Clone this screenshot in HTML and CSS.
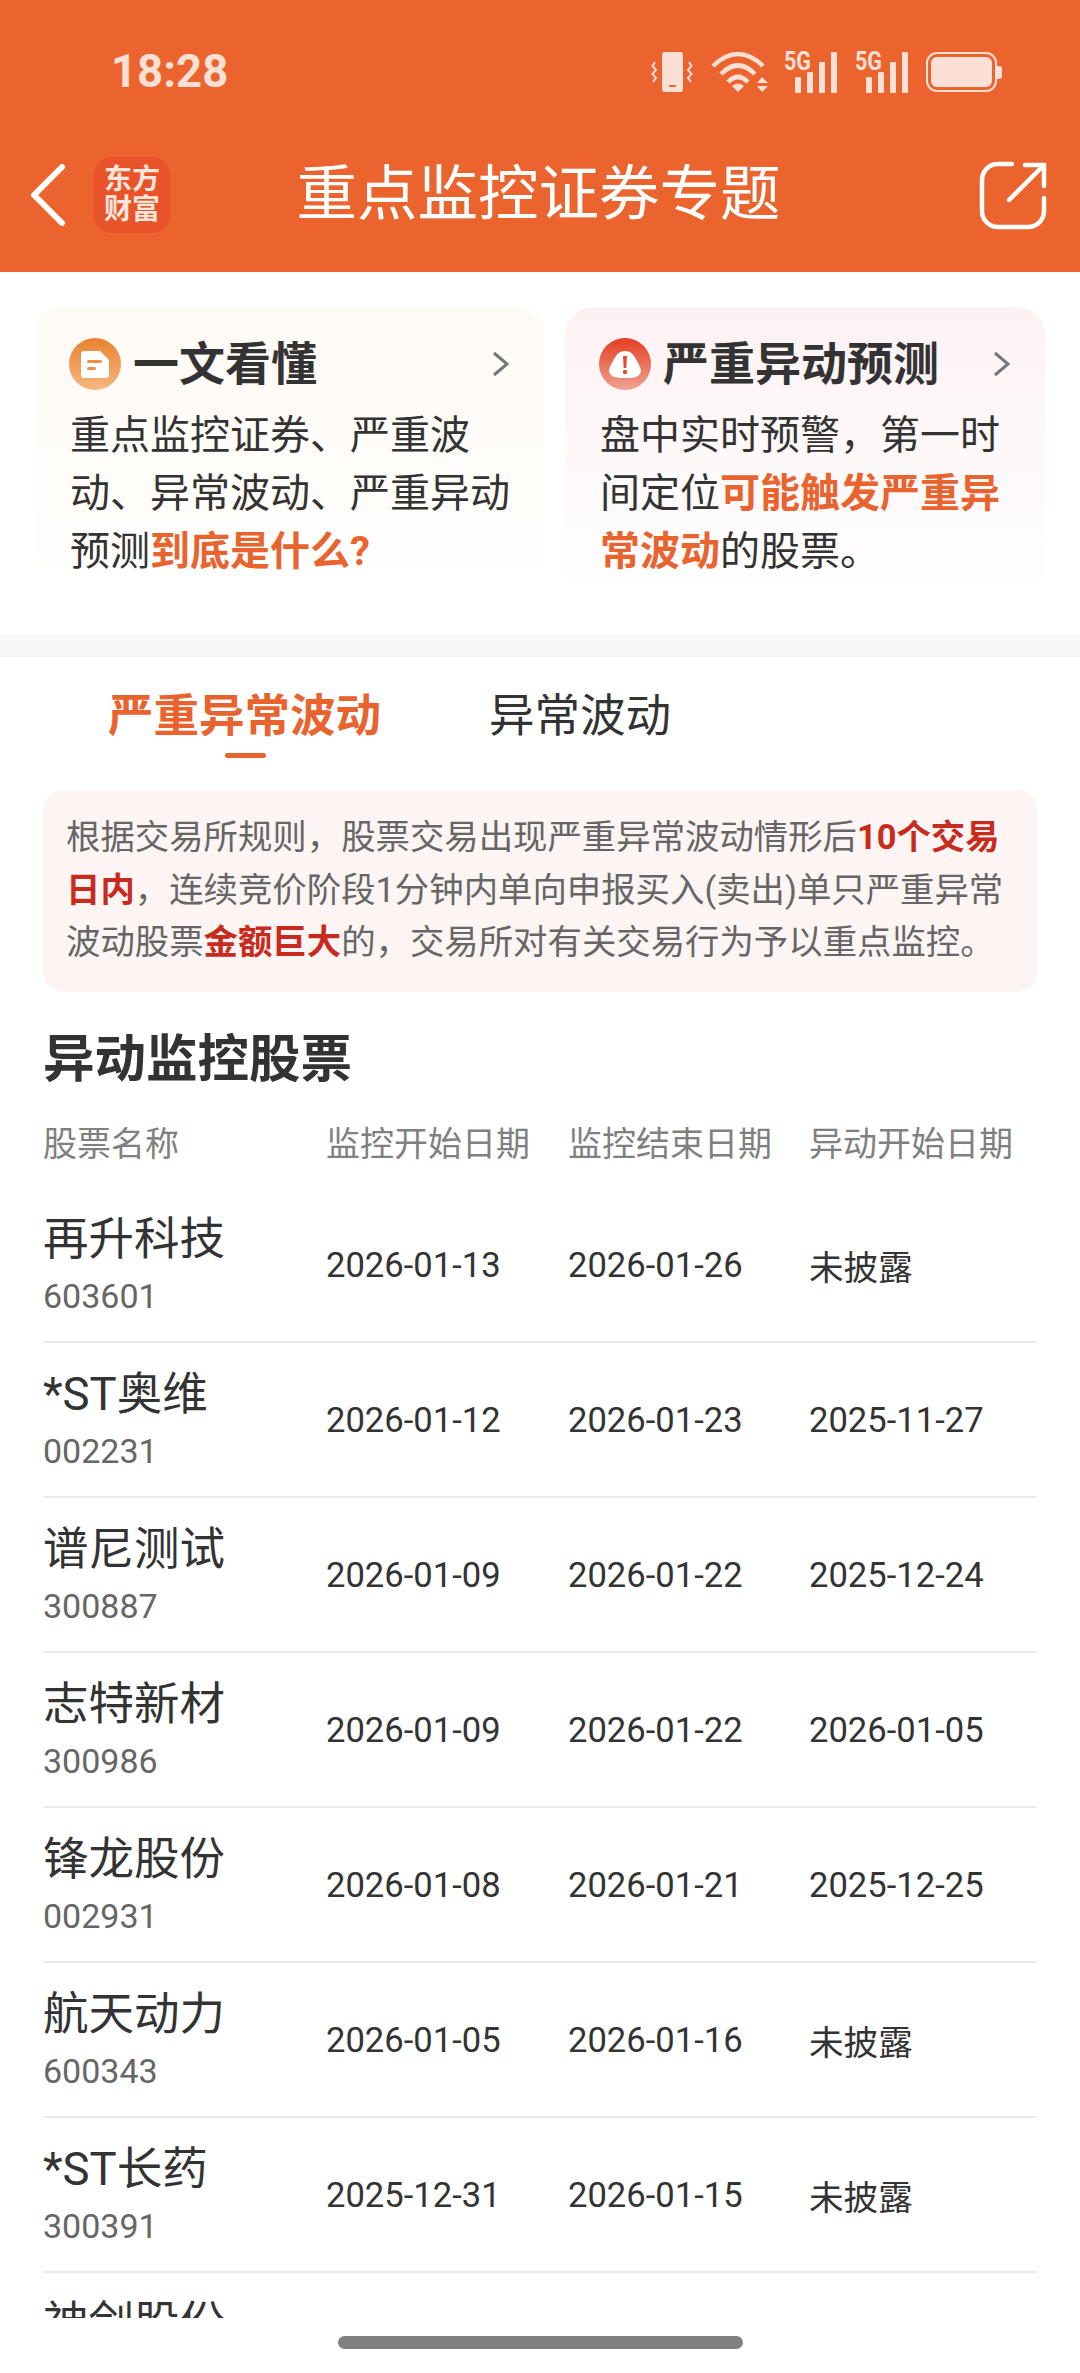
FILE: index.html
```html
<!DOCTYPE html>
<html lang="zh-CN">
<head>
    <meta charset="UTF-8">
    <meta name="viewport" content="width=device-width, initial-scale=1.0">
    <title>重点监控证券专题</title>
    <link rel="stylesheet" href="styles.css">
</head>
<body>
    <div class="screen">
        <header class="top">
            <div class="statusbar">
                <span class="time">18:28</span>
                <div class="status-icons">
                    <svg class="ic-vibrate" width="42" height="42" viewBox="0 0 42 42">
                        <rect x="11" y="1" width="21" height="40" rx="3" fill="#fde0d5"/>
                        <rect x="18" y="34" width="7" height="2" rx="1" fill="#eb632d"/>
                        <path d="M4 11 L1.500 15 L5 19 L1.500 23 L5 27 L2 31 M38 11 L40.500 15 L37 19 L40.500 23 L37 27 L40 31" fill="none" stroke="#fde0d5" stroke-width="2"/>
                    </svg>
                    <svg class="ic-wifi" width="58" height="42" viewBox="0 0 58 42">
                        <path d="M2 15 Q27 -9 52 15" fill="none" stroke="#fde0d5" stroke-width="4.500"/>
                        <path d="M10 23 Q27 6 44 23" fill="none" stroke="#fde0d5" stroke-width="4.500"/>
                        <path d="M17 31 Q27 21 37 31" fill="none" stroke="#fde0d5" stroke-width="4.500"/>
                        <path d="M21 35 Q27 30 33 35 L27 41 Z" fill="#fde0d5"/>
                        <path d="M46 32 L51 26 L57 32 Z M46 35 L57 35 L51 41 Z" fill="#fde0d5"/>
                    </svg>
                    <svg class="ic-signal" width="56" height="52" viewBox="0 -10 56 52">
                        <text class="net-label" x="0" y="19" textLength="27" lengthAdjust="spacingAndGlyphs">5G</text>
                        <rect x="11" y="26" width="6" height="16" rx="1" fill="#fde0d5"/>
                        <rect x="23" y="21" width="6" height="21" rx="1" fill="#fde0d5"/>
                        <rect x="35" y="11" width="6" height="31" rx="1" fill="#fde0d5"/>
                        <rect x="47" y="1" width="6" height="41" rx="1" fill="#fde0d5"/>
                    </svg>
                    <svg class="ic-signal" width="56" height="52" viewBox="0 -10 56 52">
                        <text class="net-label" x="0" y="19" textLength="27" lengthAdjust="spacingAndGlyphs">5G</text>
                        <rect x="11" y="26" width="6" height="16" rx="1" fill="#fde0d5"/>
                        <rect x="23" y="21" width="6" height="21" rx="1" fill="#fde0d5"/>
                        <rect x="35" y="11" width="6" height="31" rx="1" fill="#fde0d5"/>
                        <rect x="47" y="1" width="6" height="41" rx="1" fill="#fde0d5"/>
                    </svg>
                    <svg class="ic-battery" width="76" height="42" viewBox="0 0 76 42">
                        <rect x="1" y="2" width="69" height="38" rx="10" fill="none" stroke="#fde0d5" stroke-width="2"/>
                        <rect x="5" y="6" width="61" height="30" rx="6" fill="#fde0d5"/>
                        <path d="M71 15 H73 Q76 15 76 18 V25 Q76 28 73 28 H71 Z" fill="#fde0d5"/>
                    </svg>
                </div>
            </div>
            <nav class="navbar">
                <div class="nav-left">
                    <svg class="ic-back" width="36" height="62" viewBox="0 0 36 62">
                        <path d="M32 3 L4 31 L32 59" fill="none" stroke="#fff" stroke-width="6" stroke-linecap="round" stroke-linejoin="round"/>
                    </svg>
                    <div class="logo"><span>东方</span><span>财富</span></div>
                </div>
                <h1 class="page-title">重点监控证券专题</h1>
                <div class="nav-right">
                    <svg width="68" height="70" viewBox="0 0 68 70">
                        <path d="M33 4 H19 A16 16 0 0 0 3 20 V51 A16 16 0 0 0 19 67 H49 A16 16 0 0 0 65 51 V38" fill="none" stroke="#fff" stroke-width="4.500" stroke-linecap="round"/>
                        <path d="M30 40 L64 6 M46 5 H65 V26" fill="none" stroke="#fff" stroke-width="4.500" stroke-linecap="round"/>
                    </svg>
                </div>
            </nav>
        </header>

        <section class="cards">
            <a class="card card-orange">
                <div class="card-head">
                    <svg class="card-icon" width="52" height="52" viewBox="0 0 52 52">
                        <defs>
                            <linearGradient id="gradOrange" x1="0" y1="0" x2="0" y2="1">
                                <stop offset="0" stop-color="#e98230"/>
                                <stop offset="1" stop-color="#f5b87f"/>
                            </linearGradient>
                        </defs>
                        <circle cx="26" cy="26" r="26" fill="url(#gradOrange)"/>
                        <path d="M15 13 H31 L40 22 V37 Q40 40 37 40 H15 Q12 40 12 37 V16 Q12 13 15 13 Z" fill="#fff"/>
                        <rect x="18" y="22" width="15" height="3" rx="1.500" fill="#ec9145"/>
                        <rect x="18" y="29" width="9" height="3" rx="1.500" fill="#ec9145"/>
                    </svg>
                    <h2 class="card-title">一文看懂</h2>
                    <svg class="card-arrow" width="18" height="26" viewBox="0 0 18 26">
                        <path d="M2 2 L15 13 L2 24" fill="none" stroke="#77777a" stroke-width="3"/>
                    </svg>
                </div>
                <p class="card-text">重点监控证券、严重波动、异常波动、严重异动预测<b>到底是什么?</b></p>
            </a>
            <a class="card card-red">
                <div class="card-head">
                    <svg class="card-icon" width="52" height="52" viewBox="0 0 52 52">
                        <defs>
                            <linearGradient id="gradRed" x1="0" y1="0" x2="0" y2="1">
                                <stop offset="0" stop-color="#e43e20"/>
                                <stop offset="1" stop-color="#efa294"/>
                            </linearGradient>
                        </defs>
                        <circle cx="26" cy="26" r="26" fill="url(#gradRed)"/>
                        <path d="M26 13 C32 13 35 17 38 23 C41 29 44 33 40 37 C37 40 32 40 26 40 C20 40 15 40 12 37 C8 33 11 29 14 23 C17 17 20 13 26 13 Z" fill="#fff"/>
                        <path d="M24 18 H28 L27.300 30 H24.700 Z" fill="#e5492e"/>
                        <circle cx="26" cy="34" r="2.200" fill="#e5492e"/>
                    </svg>
                    <h2 class="card-title">严重异动预测</h2>
                    <svg class="card-arrow" width="18" height="26" viewBox="0 0 18 26">
                        <path d="M2 2 L15 13 L2 24" fill="none" stroke="#77777a" stroke-width="3"/>
                    </svg>
                </div>
                <p class="card-text">盘中实时预警，第一时间定位<b>可能触发严重异常波动</b>的股票。</p>
            </a>
        </section>

        <div class="band"></div>

        <main class="content">
            <div class="tabs">
                <span class="tab active">严重异常波动</span>
                <span class="tab">异常波动</span>
            </div>

            <p class="notice">根据交易所规则，股票交易出现严重异常波动情形后<b>10个交易日内</b>，连续竞价阶段1分钟内单向申报买入(卖出)单只严重异常波动股票<b>金额巨大</b>的，交易所对有关交易行为予以重点监控。</p>

            <h2 class="section-title">异动监控股票</h2>

            <div class="thead">
                <span>股票名称</span>
                <span>监控开始日期</span>
                <span>监控结束日期</span>
                <span>异动开始日期</span>
            </div>

            <div class="row">
                <div class="stock"><div class="name">再升科技</div><div class="code">603601</div></div>
                <span>2026-01-13</span><span>2026-01-26</span><span>未披露</span>
            </div>
            <div class="row">
                <div class="stock"><div class="name">*ST奥维</div><div class="code">002231</div></div>
                <span>2026-01-12</span><span>2026-01-23</span><span>2025-11-27</span>
            </div>
            <div class="row">
                <div class="stock"><div class="name">谱尼测试</div><div class="code">300887</div></div>
                <span>2026-01-09</span><span>2026-01-22</span><span>2025-12-24</span>
            </div>
            <div class="row">
                <div class="stock"><div class="name">志特新材</div><div class="code">300986</div></div>
                <span>2026-01-09</span><span>2026-01-22</span><span>2026-01-05</span>
            </div>
            <div class="row">
                <div class="stock"><div class="name">锋龙股份</div><div class="code">002931</div></div>
                <span>2026-01-08</span><span>2026-01-21</span><span>2025-12-25</span>
            </div>
            <div class="row">
                <div class="stock"><div class="name">航天动力</div><div class="code">600343</div></div>
                <span>2026-01-05</span><span>2026-01-16</span><span>未披露</span>
            </div>
            <div class="row">
                <div class="stock"><div class="name">*ST长药</div><div class="code">300391</div></div>
                <span>2025-12-31</span><span>2026-01-15</span><span>未披露</span>
            </div>
            <div class="row row-cut">
                <div class="stock"><div class="name">神剑股份</div></div>
            </div>
        </main>

        <footer class="homebar"><div class="home-indicator"></div></footer>
    </div>
</body>
</html>
```

FILE: styles.css
```css
* {
    box-sizing: border-box;
}
html, body {
    margin: 0;
    padding: 0;
}
body {
    background: #fff;
    color: #333;
    font-family: Roboto, "Noto Sans CJK SC", sans-serif;
}
p, h1, h2 {
    margin: 0;
}

.screen {
    display: flex;
    flex-direction: column;
    height: 2373px;
    overflow: hidden;
}

/* orange header */
.top {
    height: 272px;
    background: #eb632d;
    flex: none;
}
.statusbar {
    display: flex;
    align-items: center;
    justify-content: space-between;
    height: 144px;
    padding: 0 78px 0 111px;
}
.time {
    font-size: 45.500px;
    font-weight: 700;
    color: #fde0d5;
    line-height: 54px;
}
.status-icons {
    display: flex;
    align-items: center;
    gap: 15px;
    height: 42px;
}
.status-icons svg {
    display: block;
}
.ic-wifi {
    margin-left: 3px;
}
.ic-signal {
    margin-top: -10px;
}
.net-label {
    font-family: Roboto, sans-serif;
    font-size: 25px;
    font-weight: 700;
    fill: #fde0d5;
}
.navbar {
    display: grid;
    grid-template-columns: 1fr auto 1fr;
    align-items: center;
    height: 102px;
    padding: 0 33px 0 30px;
}
.nav-left {
    display: flex;
    align-items: center;
    gap: 28px;
}
.ic-back {
    display: block;
}
.logo {
    width: 76px;
    height: 76px;
    border-radius: 18px;
    background: #e8532a;
    color: #fde6dc;
    font-size: 28px;
    font-weight: 700;
    line-height: 30px;
    display: flex;
    flex-direction: column;
    align-items: center;
    justify-content: center;
}
.page-title {
    font-size: 60.500px;
    font-weight: 400;
    color: #fff;
    line-height: 70px;
}
.nav-right {
    display: flex;
    justify-content: flex-end;
}
.nav-right svg {
    display: block;
}

/* two entry cards */
.cards {
    display: grid;
    grid-template-columns: 509px 480px;
    column-gap: 21px;
    height: 363px;
    padding: 35px 0 0 35px;
    flex: none;
}
.card {
    display: block;
    height: 285px;
    border-radius: 28px 28px 0 0;
    padding: 31px 34px 0 35px;
}
.card-orange {
    background: linear-gradient(180deg, #fefaf5 0%, #fffdfa 70%, #fff 100%);
}
.card-red {
    background: linear-gradient(180deg, #fdf2f3 0%, #fefafb 70%, #fff 100%);
}
.card-head {
    display: flex;
    align-items: center;
    height: 52px;
}
.card-icon {
    flex: none;
    margin-left: -1px;
}
.card-title {
    margin-left: 12px;
    font-size: 46px;
    font-weight: 700;
    color: #333;
    line-height: 52px;
    white-space: nowrap;
}
.card-arrow {
    margin-left: auto;
    flex: none;
}
.card-text {
    margin-top: 17px;
    font-size: 40px;
    line-height: 58px;
    color: #333;
}
.card-text b {
    color: #e8632e;
    font-weight: 700;
}

.band {
    height: 22px;
    background: #f7f7f9;
    flex: none;
}

/* tabs + list */
.content {
    height: 1661px;
    flex: none;
    overflow: hidden;
    padding: 0 43px;
}
.tabs {
    display: flex;
    gap: 108px;
    height: 101px;
    padding: 31px 0 0 65px;
}
.tab {
    position: relative;
    font-size: 45.500px;
    line-height: 58px;
    color: #333;
    height: 58px;
    white-space: nowrap;
}
.tab.active {
    color: #e8632e;
    font-weight: 700;
}
.tab.active::after {
    content: "";
    position: absolute;
    left: 50%;
    bottom: -12px;
    width: 41px;
    height: 5px;
    margin-left: -20px;
    border-radius: 3px;
    background: #e8632e;
}
.notice {
    margin-top: 32px;
    height: 202px;
    padding: 21px 20px 0 23px;
    background: #fdf5f3;
    border-radius: 20px;
    font-size: 34.400px;
    line-height: 52.500px;
    color: #666;
}
.notice b {
    color: #c92a1e;
    font-weight: 700;
}
.section-title {
    margin-top: 36px;
    font-size: 51.500px;
    font-weight: 700;
    line-height: 64px;
    color: #333;
}
.thead,
.row {
    display: grid;
    grid-template-columns: 283px 242px 241px 1fr;
    align-items: center;
}
.thead {
    height: 96px;
    padding-top: 3px;
    font-size: 34px;
    color: #808080;
}
.row {
    height: 155px;
    border-bottom: 2px solid #eaeaea;
    font-size: 34.600px;
    color: #333;
}
.row-cut {
    align-items: start;
    padding-top: 19px;
}
.stock {
    padding: 2px 0 4px;
}
.name {
    font-size: 45.500px;
    line-height: 60px;
}
.code {
    margin-top: 4px;
    font-size: 34px;
    line-height: 44px;
    color: #666;
}

.homebar {
    flex: 1;
    display: flex;
    justify-content: center;
    padding-top: 18px;
}
.home-indicator {
    width: 405px;
    height: 13px;
    border-radius: 7px;
    background: #808080;
}
```
